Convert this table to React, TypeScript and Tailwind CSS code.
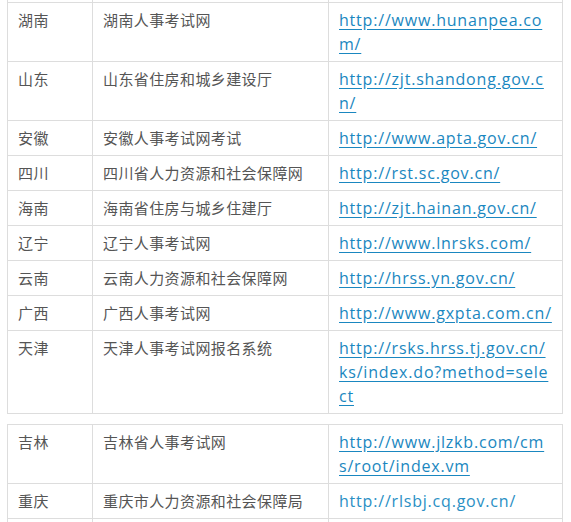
import React from "react";

type Row = { p: string; n: string; u: string; plain?: boolean };

const t1: Row[] = [
  { p: "湖南", n: "湖南人事考试网", u: "http://www.hunanpea.com/" },
  { p: "山东", n: "山东省住房和城乡建设厅", u: "http://zjt.shandong.gov.cn/" },
  { p: "安徽", n: "安徽人事考试网考试", u: "http://www.apta.gov.cn/" },
  { p: "四川", n: "四川省人力资源和社会保障网", u: "http://rst.sc.gov.cn/" },
  { p: "海南", n: "海南省住房与城乡住建厅", u: "http://zjt.hainan.gov.cn/" },
  { p: "辽宁", n: "辽宁人事考试网", u: "http://www.lnrsks.com/" },
  { p: "云南", n: "云南人力资源和社会保障网", u: "http://hrss.yn.gov.cn/" },
  { p: "广西", n: "广西人事考试网", u: "http://www.gxpta.com.cn/" },
  { p: "天津", n: "天津人事考试网报名系统", u: "http://rsks.hrss.tj.gov.cn/ks/index.do?method=select" },
];

const t2: Row[] = [
  { p: "吉林", n: "吉林省人事考试网", u: "http://www.jlzkb.com/cms/root/index.vm" },
  { p: "重庆", n: "重庆市人力资源和社会保障局", u: "http://rlsbj.cq.gov.cn/", plain: true },
];

const cn =
  "border border-[#dddddd] px-[10px] py-[5px] align-top text-[15px] leading-[24px] tracking-[0.4px] text-[#555555]";

function Table({ rows, first, last }: { rows: Row[]; first?: boolean; last?: boolean }) {
  return (
    <table className="w-full table-fixed border-collapse">
      <colgroup>
        <col className="w-[85px]" />
        <col className="w-[236px]" />
        <col />
      </colgroup>
      <tbody>
        {first && (
          <tr>
            <td className="h-[2px] border-x border-[#dddddd] p-0" />
            <td className="h-[2px] border-x border-[#dddddd] p-0" />
            <td className="h-[2px] border-x border-[#dddddd] p-0" />
          </tr>
        )}
        {rows.map((r) => (
          <tr key={r.p}>
            <td className={cn}>{r.p}</td>
            <td className={cn}>{r.n}</td>
            <td className="border border-[#dddddd] px-[10px] py-[5px] align-top text-[16px] leading-[24px] tracking-[0.8px] break-all">
              {r.plain ? (
                <span className="text-[#2a8fc4]">{r.u}</span>
              ) : (
                <a href="#" className="text-[#1a87c0] underline underline-offset-[3px]">
                  {r.u}
                </a>
              )}
            </td>
          </tr>
        ))}
        {last && (
          <tr>
            <td className="h-[35px] border border-[#dddddd] p-0" />
            <td className="h-[35px] border border-[#dddddd] p-0" />
            <td className="h-[35px] border border-[#dddddd] p-0" />
          </tr>
        )}
      </tbody>
    </table>
  );
}

export default function App() {
  return (
    <div
      className="h-[522px] overflow-hidden bg-white pl-[7px] pr-[8px]"
      style={{ fontFamily: '"Open Sans", "Noto Sans CJK SC", sans-serif' }}
    >
      <Table rows={t1} first />
      <div className="mt-[10px]">
        <Table rows={t2} last />
      </div>
    </div>
  );
}
